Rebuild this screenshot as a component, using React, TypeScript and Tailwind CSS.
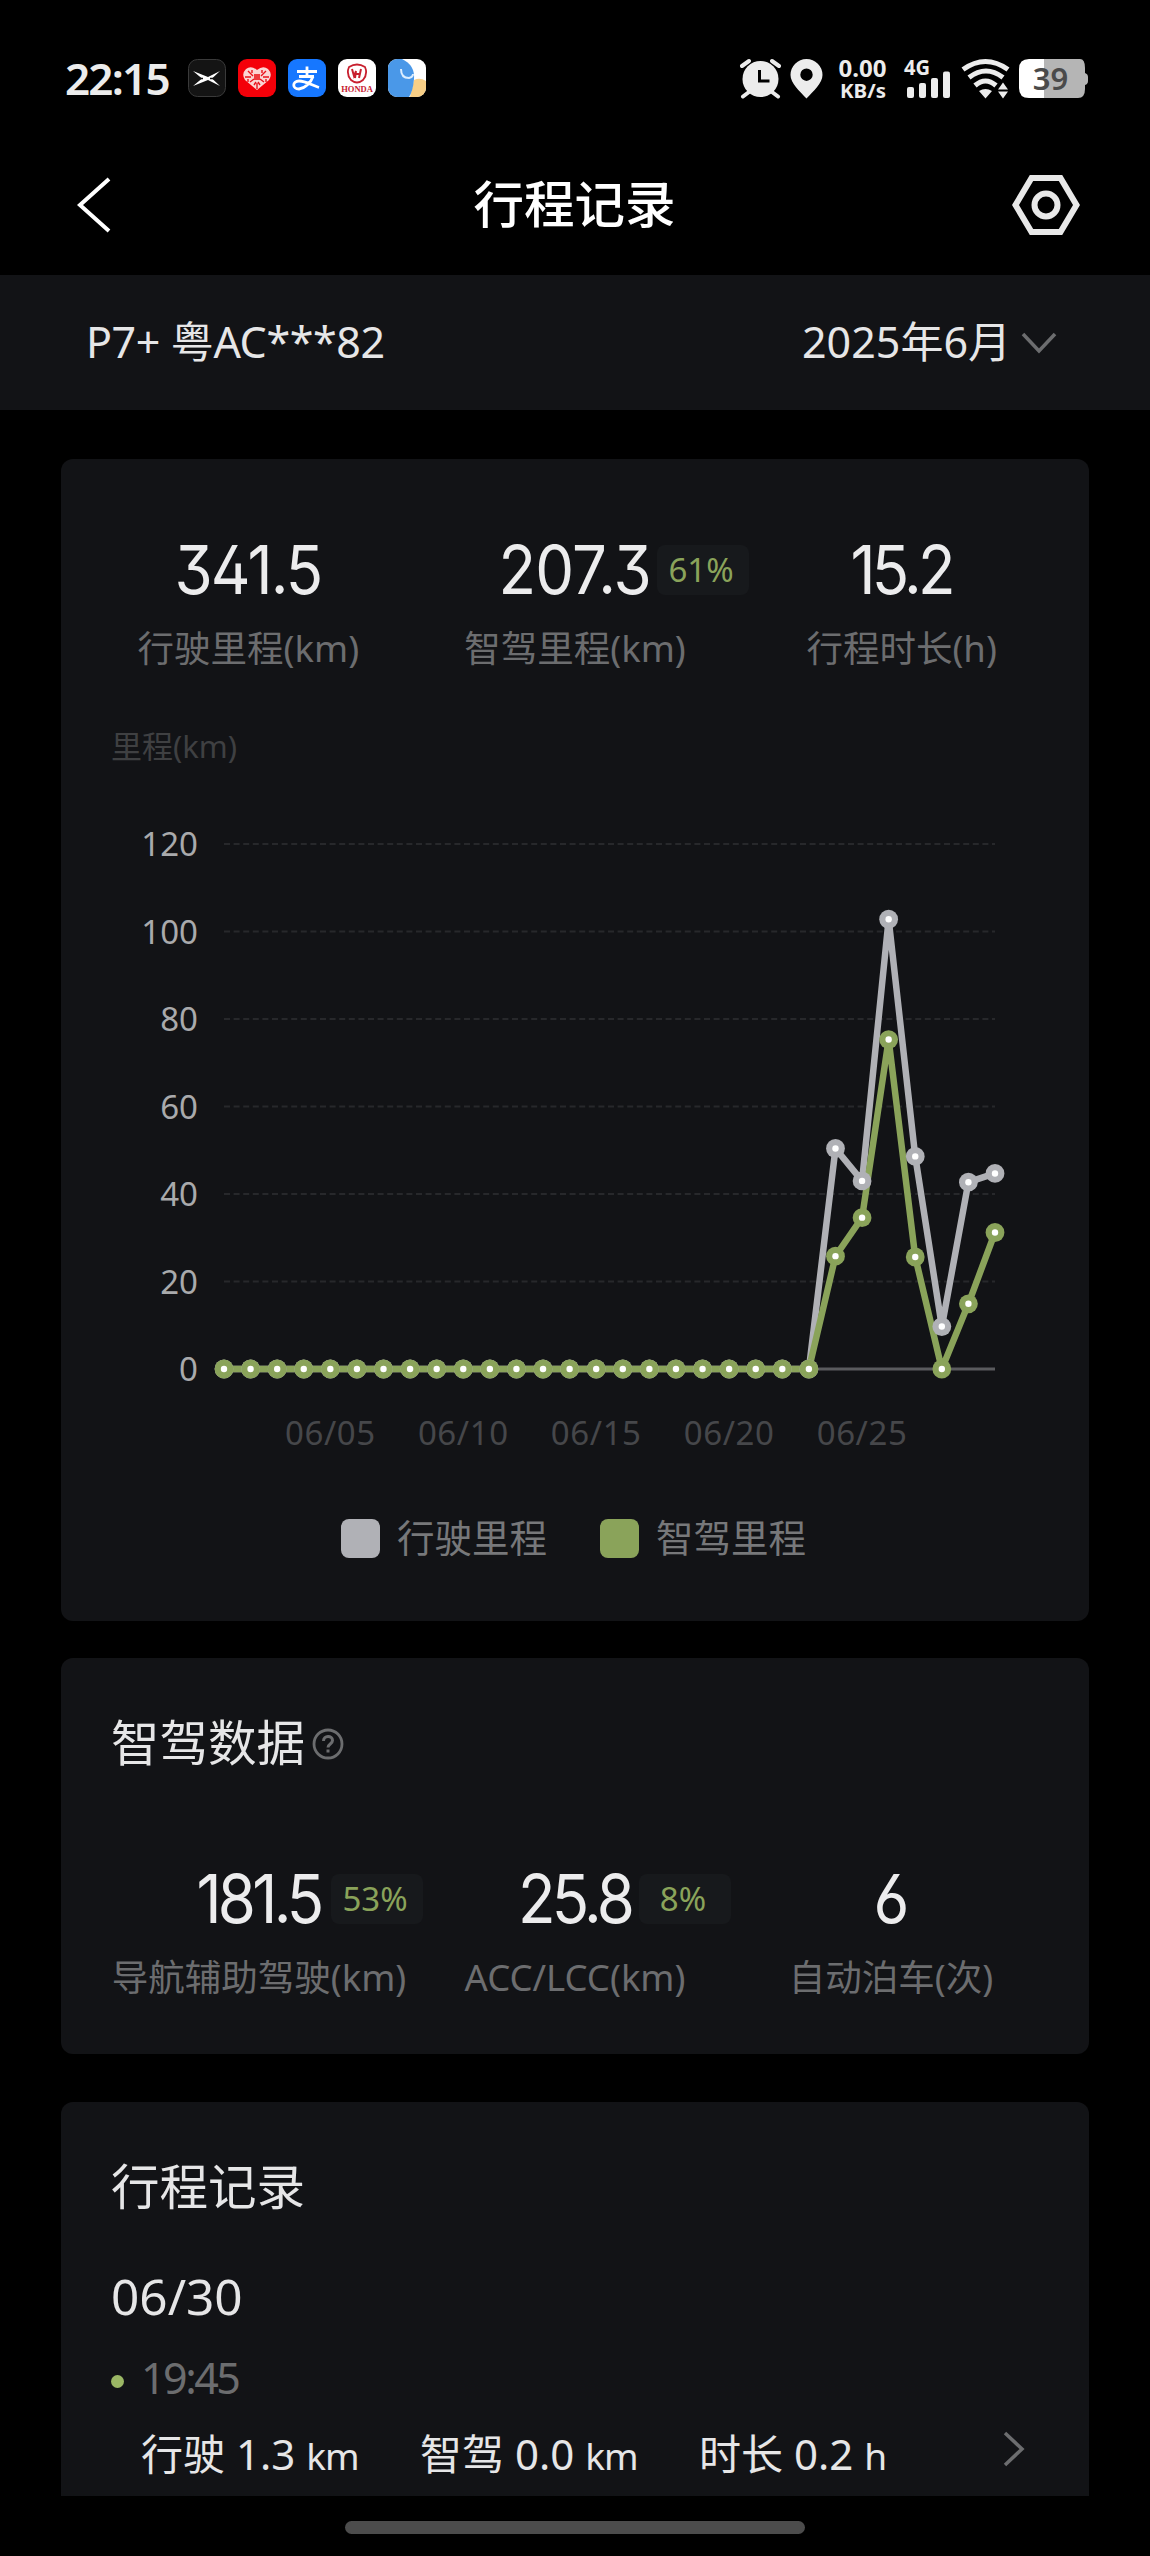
import React from "react";

interface Stat {
  value: string;
  label: string;
  width: number;
  tracking: string;
  percent?: string;
}

const mileageStats: Stat[] = [
  { value: "341.5", label: "行驶里程(km)", width: 142, tracking: "tracking-[-2px]" },
  { value: "207.3", label: "智驾里程(km)", width: 146, tracking: "tracking-[-1px]", percent: "61%" },
  { value: "15.2", label: "行程时长(h)", width: 102, tracking: "tracking-[-4px]" },
];

const assistStats: Stat[] = [
  { value: "181.5", label: "导航辅助驾驶(km)", width: 126, tracking: "tracking-[-4px]", percent: "53%" },
  { value: "25.8", label: "ACC/LCC(km)", width: 110, tracking: "tracking-[-4px]", percent: "8%" },
  { value: "6", label: "自动泊车(次)", width: 32, tracking: "tracking-normal" },
];

const trip = [
  { name: "行驶", value: "1.3", unit: "km" },
  { name: "智驾", value: "0.0", unit: "km" },
  { name: "时长", value: "0.2", unit: "h" },
];

const zeros: number[] = Array(23).fill(0);
const driven = [...zeros, 50.4, 43, 102.8, 48.6, 9.7, 42.7, 44.7];
const assisted = [...zeros, 25.8, 34.6, 75.3, 25.6, 0, 14.9, 31.2];

const GRAY = "#b0b1b6";
const GREEN = "#8aa35a";

// chart geometry
const X0 = 163;
const X1 = 934;
const Y0 = 569;
const toX = (i: number) => X0 + (i * (X1 - X0)) / 29;
const toY = (v: number) => Y0 - v * 4.375;
const toPoints = (data: number[]) =>
  data.map((v, i) => `${toX(i)},${toY(v)}`).join(" ");

function Dots({ data, color }: { data: number[]; color: string }) {
  return (
    <g>
      {data.map((v, i) => (
        <g key={i}>
          <circle cx={toX(i)} cy={toY(v)} r="9.4" fill={color} />
          <circle cx={toX(i)} cy={toY(v)} r="3.2" fill="#fff" />
        </g>
      ))}
    </g>
  );
}

function MileageChart() {
  return (
    <svg
      width="1028"
      height="680"
      viewBox="0 0 1028 680"
      className="block font-['Noto_Sans',sans-serif] text-[33px]"
    >
      {[120, 100, 80, 60, 40, 20, 0].map((v) => (
        <g key={v}>
          <text x="137" y={toY(v) + 12} textAnchor="end" fill="#a9aaac">
            {v}
          </text>
          {v > 0 && (
            <line
              x1={X0}
              x2={X1}
              y1={toY(v)}
              y2={toY(v)}
              stroke="#27282b"
              strokeWidth="2"
              strokeDasharray="6 3.6"
            />
          )}
        </g>
      ))}
      <line x1={X0} x2={X1} y1={Y0} y2={Y0} stroke="#5a5b5e" strokeWidth="3" />
      {[5, 10, 15, 20, 25].map((day) => (
        <text
          key={day}
          x={toX(day - 1)}
          y="645"
          textAnchor="middle"
          fill="#46474a"
          letterSpacing="0.6"
        >
          {`06/${String(day).padStart(2, "0")}`}
        </text>
      ))}
      <polyline
        points={toPoints(driven)}
        fill="none"
        stroke={GRAY}
        strokeWidth="6.5"
        strokeLinejoin="bevel"
      />
      <polyline
        points={toPoints(assisted)}
        fill="none"
        stroke={GREEN}
        strokeWidth="6.5"
        strokeLinejoin="bevel"
      />
      <Dots data={driven} color={GRAY} />
      <Dots data={assisted} color={GREEN} />
    </svg>
  );
}

function StatItem({ value, label, width, tracking, percent }: Stat) {
  return (
    <div className="flex flex-col items-center">
      <div className="relative flex h-[50px] justify-center" style={{ width }}>
        <span
          className={`origin-center scale-x-[0.92] font-['Inter',sans-serif] text-[67px] leading-[50px] font-normal whitespace-nowrap text-[#ececed] [font-feature-settings:'cv09','ss01'] ${tracking}`}
        >
          {value}
        </span>
        {percent && (
          <span className="absolute top-0 left-full ml-[9px] flex h-[50px] w-[92px] items-center justify-center rounded-lg bg-[#17191c] pr-1 text-[33px] text-[#8aa35a]">
            {percent}
          </span>
        )}
      </div>
      <span className="mt-[28px] text-[36.5px] leading-[50px] whitespace-nowrap text-[#6c6d6f]">
        {label}
      </span>
    </div>
  );
}

function StatusBar() {
  return (
    <div className="flex h-[134px] items-center pt-[22px] pl-[65px]">
      <span className="w-[123px] text-[44px] leading-[40px] font-semibold tracking-[-1.8px] text-[#ececec]">
        22:15
      </span>
      <div className="flex gap-3">
        <svg width="38" height="38" viewBox="0 0 38 38">
          <rect x=".5" y=".5" width="37" height="37" rx="9" fill="#141414" stroke="#3a3a3a" />
          <path d="M5 12 20 18 32 12 24 19.500 32 27 20 21 5 27 14 19.500z" fill="#fff" />
          <path d="M10 19.500h5M22 19.500h5" stroke="#141414" strokeWidth="1.500" />
        </svg>
        <svg width="38" height="38" viewBox="0 0 38 38">
          <rect width="38" height="38" rx="9" fill="#f40009" />
          <path d="M19 31 7 21Q3 15 8 10q5-4 11 1 6-5 11-1 5 5 1 11z" fill="#fbd5d3" />
          <path
            d="M10 12l5 5M28 12l-5 5M7 18h6M25 18h6M12 23l4-3M26 23l-4-3M19 24v6M10 20v3M28 20v3M14 11v3M24 11v3M16 26l2-3M22 26l-2-3"
            stroke="#e8131b"
            strokeWidth="1.4"
          />
          <rect x="16" y="15" width="6" height="6" fill="#ee3a3e" />
        </svg>
        <svg width="38" height="38" viewBox="0 0 38 38" fill="none" stroke="#fff">
          <rect width="38" height="38" rx="9" fill="#1677ff" stroke="none" />
          <path d="M9 12.500h20M19 7.500v10M11 17.500h15" strokeWidth="2.800" />
          <path
            d="M25 17.500c-2 6-8 12-14 12.500-7 0-7-8 0-8 7 0 13 4.500 20 6.500"
            strokeWidth="2.800"
          />
        </svg>
        <div className="flex size-[38px] flex-col items-center rounded-[9px] bg-white text-[#c8202f]">
          <svg width="22" height="22" viewBox="0 0 22 22" className="mt-1" fill="none" stroke="currentColor">
            <path d="M3 4q8-5 16 0 3 7-2 13-6 5-12 0Q0 11 3 4z" strokeWidth="1.800" />
            <path d="M6 6l2 7 2-5M10 8l-1 7M15 6l-2 9M10 11h4" strokeWidth="2" />
          </svg>
          <span className="font-['Liberation_Serif',serif] text-[8.500px] leading-[9px] font-bold">
            HONDA
          </span>
        </div>
        <svg width="38" height="38" viewBox="0 0 38 38">
          <defs>
            <clipPath id="app">
              <rect width="38" height="38" rx="9" />
            </clipPath>
          </defs>
          <g clipPath="url(#app)">
            <rect width="38" height="38" fill="#fff" />
            <path d="M26 21q6-3 12 1v16H22z" fill="#f8cf86" />
            <path d="M0 0h14q13 6 12 20-1 12-5 18H0z" fill="#4a98e8" />
            <path d="M13 10q0 9 8 9 4-1 4-4" fill="none" stroke="#dceeff" strokeWidth="2" />
          </g>
        </svg>
      </div>
      <svg
        width="350"
        height="44"
        viewBox="737 55 350 44"
        className="ml-[312px] overflow-visible"
        fill="#ececec"
      >
        {/* alarm */}
        <circle cx="759.500" cy="78" r="18" />
        <path
          d="M741 65l7-5M778 65l-7-5M748 91l-6 4.500M771 91l6 4.500"
          stroke="#ececec"
          strokeWidth="4"
          strokeLinecap="round"
        />
        <path d="M758.500 69v11h10" fill="none" stroke="#000" strokeWidth="3" />
        {/* location */}
        <path
          fillRule="evenodd"
          d="M805.500 58a16 16 0 0 1 16 16c0 8-9 16-16 23.500-7-7.500-16-15.500-16-23.500a16 16 0 0 1 16-16zm0 9.500a6.200 6.200 0 1 0 0 12.400 6.200 6.200 0 0 0 0-12.400z"
        />
        <text x="861.500" y="76" textAnchor="middle" fontSize="23" fontWeight="700" textLength="48" lengthAdjust="spacingAndGlyphs">
          0.00
        </text>
        <text x="862" y="97" textAnchor="middle" fontSize="20" fontWeight="700" textLength="46" lengthAdjust="spacingAndGlyphs">
          KB/s
        </text>
        <text x="903" y="74" fontSize="20.500" fontWeight="700" textLength="26" lengthAdjust="spacingAndGlyphs">
          4G
        </text>
        <rect x="906" y="86" width="7" height="11" rx="2" />
        <rect x="918" y="82" width="7" height="15" rx="2" />
        <rect x="930" y="77" width="7" height="20" rx="2" />
        <rect x="942" y="70.500" width="7" height="26.500" rx="2" />
        {/* wifi */}
        <g fill="none" stroke="#ececec" strokeWidth="5">
          <path d="M962 68.500q22.500-16 45 0" />
          <path d="M968 76.500q17-13 34 0" />
          <path d="M974 84.500q10.500-9 21 0" />
        </g>
        <path d="M978 90q6.500-4 13 0l-6.500 7.500zM997 88.500l5-7 5 7zM997 90.500h10l-5 7z" />
        {/* battery */}
        <path d="M1028 58h51q5 0 5 9v5q3 1 3 4v4q0 3-3 4v4q0 9-7 9h-49z" fill="#b5b5b5" />
        <path d="M1043 58h-15q-10 0-10 10v19q0 10 10 10h15z" fill="#fff" />
        <text x="1049.500" y="89" textAnchor="middle" fontSize="31" fontWeight="600" fill="#4a4a4a">
          39
        </text>
      </svg>
    </div>
  );
}

export default function App() {
  return (
    <div className="flex h-[2556px] w-[1150px] flex-col overflow-hidden bg-black font-['Noto_Sans','Noto_Sans_CJK_SC',sans-serif] text-[#e6e6e7]">
      <StatusBar />

      <header className="flex h-[141px] items-center justify-between pr-[70px] pl-[76px]">
        <svg width="60" height="56" viewBox="0 0 60 56" fill="none" stroke="#fff" strokeWidth="4">
          <path d="M33 2 4 28 33 54" />
        </svg>
        <h1 className="pb-px pl-px text-[50.500px] leading-[60px] font-medium text-white">
          行程记录
        </h1>
        <svg width="68" height="62" viewBox="0 0 68 62" fill="none" stroke="#e8e8e8">
          <path d="M19.500 4h29L64.500 31l-16 27h-29L3.500 31z" strokeWidth="6" />
          <circle cx="34" cy="31" r="11.500" strokeWidth="6" />
        </svg>
      </header>

      <div className="flex h-[135px] items-center justify-between bg-[#121316] pr-[93px] pl-[86px] text-[43px]">
        <span className="tracking-[-0.4px]">P7+ 粤AC***82</span>
        <div className="flex items-center gap-2.5">
          <span>2025年6月</span>
          <svg width="36" height="24" viewBox="0 0 36 24" fill="none" stroke="#6c6d6f" strokeWidth="3.500">
            <path d="M2 3 18 20 34 3" />
          </svg>
        </div>
      </div>

      <main className="flex h-[2086px] flex-col overflow-hidden px-[61px] pt-[49px]">
        <section className="h-[1162px] shrink-0 rounded-xl bg-[#121316] pt-[86px]">
          <div className="grid grid-cols-3 px-6">
            {mileageStats.map((s) => (
              <StatItem key={s.label} {...s} />
            ))}
          </div>
          <p className="mt-[41px] mb-[22px] pl-[50px] text-[31px] leading-[64px] text-[#3f4042]">
            里程(km)
          </p>
          <MileageChart />
          <div className="mt-[33px] flex items-center justify-center pr-[3px] text-[37.500px] leading-[50px] text-[#77787a]">
            <i className="mr-[17px] size-[39px] rounded-lg bg-[#b0b1b6]" />
            行驶里程
            <i className="mr-[17px] ml-[53px] size-[39px] rounded-lg bg-[#8aa35a]" />
            智驾里程
          </div>
        </section>

        <section className="mt-[37px] h-[396px] shrink-0 rounded-xl bg-[#121316] pt-[54px]">
          <div className="flex items-center pl-[50px]">
            <h2 className="text-[48.500px] leading-[60px]">智驾数据</h2>
            <svg width="34" height="34" viewBox="0 0 34 34" className="mt-1 ml-1.5" fill="none" stroke="#6c6d6f">
              <circle cx="17" cy="17" r="14" strokeWidth="2.800" />
              <path d="M12.500 14c0-6 9-6 9-.5 0 3.500-4.500 3.500-4.500 7M17 22.500v3" strokeWidth="3" />
            </svg>
          </div>
          <div className="mt-[102px] grid grid-cols-3 px-10">
            {assistStats.map((s) => (
              <StatItem key={s.label} {...s} />
            ))}
          </div>
        </section>

        <section className="mt-12 h-[394px] shrink-0 rounded-t-xl bg-[#121316] pt-[54px] pl-[50px]">
          <h2 className="text-[48.500px] leading-[60px]">行程记录</h2>
          <p className="mt-[50px] text-[49.500px] leading-[60px]">06/30</p>
          <div className="mt-[27px] flex items-center text-[43px] leading-[50px] tracking-[-2.500px] text-[#6c6d6f]">
            <i className="mt-1.5 mr-[17px] size-[13px] rounded-full bg-[#9bb765]" />
            19:45
          </div>
          <div className="mt-[26px] flex items-center pl-[30px]">
            {trip.map(({ name, value, unit }) => (
              <p
                key={name}
                className="w-[279px] text-[42px] leading-[50px] whitespace-nowrap"
              >
                {name} {value}{" "}
                <span className="text-[37px] tracking-[-1px]">{unit}</span>
              </p>
            ))}
            <svg width="24" height="36" viewBox="0 0 24 36" className="mb-3 ml-[24px]" fill="none" stroke="#6c6d6f" strokeWidth="3.500">
              <path d="M3 2 20 18 3 34" />
            </svg>
          </div>
        </section>
      </main>

      <footer className="flex flex-1 justify-center pt-[25px]">
        <div className="h-[13px] w-[460px] rounded-full bg-[#4c4c4c]" />
      </footer>
    </div>
  );
}
